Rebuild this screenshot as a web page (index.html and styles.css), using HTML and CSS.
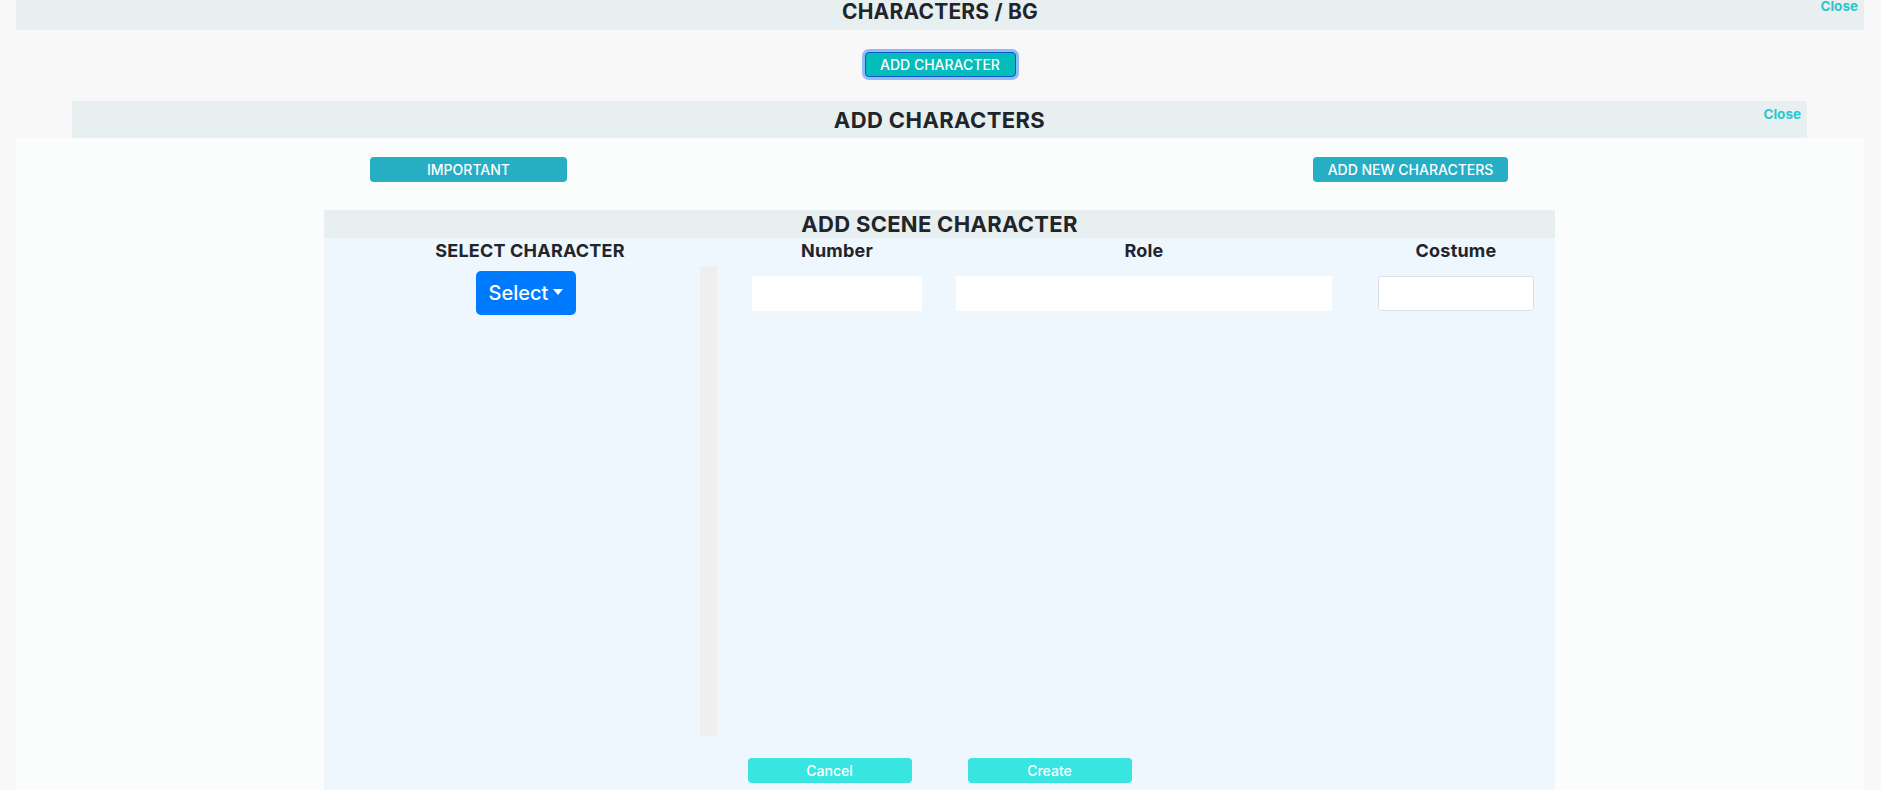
FILE: index.html
```html
<!DOCTYPE html>
<html lang="en">
<head>
<meta charset="utf-8">
<title>Characters / BG</title>
<link rel="stylesheet" href="styles.css">
</head>
<body>
<div class="page">
  <div class="modal-header">
    <h2 class="modal-title title-top">CHARACTERS / BG</h2>
    <a class="close-link close-top" href="#">Close</a>
  </div>
  <div class="toolbar">
    <button class="btn-add-character">ADD CHARACTER</button>
  </div>
  <div class="inner-header">
    <h2 class="modal-title">ADD CHARACTERS</h2>
    <a class="close-link close-inner" href="#">Close</a>
  </div>
  <div class="inner-body">
    <div class="actions">
      <button class="btn-info btn-important">IMPORTANT</button>
      <button class="btn-info btn-new">ADD NEW CHARACTERS</button>
    </div>
    <div class="scene-panel">
      <div class="scene-header">ADD SCENE CHARACTER</div>
      <div class="scene-body">
        <div class="scene-row">
          <div class="col col-select">
            <div class="col-title">SELECT CHARACTER</div>
            <button class="btn-select">Select<span class="caret"></span></button>
          </div>
          <div class="scroll-bar"></div>
          <div class="col col-number">
            <div class="col-title">Number</div>
            <input class="field field-plain" type="text">
          </div>
          <div class="col col-role">
            <div class="col-title">Role</div>
            <input class="field field-plain" type="text">
          </div>
          <div class="col col-costume">
            <div class="col-title">Costume</div>
            <input class="field field-bordered" type="text">
          </div>
        </div>
        <div class="footer">
          <button class="btn-footer">Cancel</button>
          <button class="btn-footer">Create</button>
        </div>
      </div>
    </div>
  </div>
</div>
</body>
</html>
```
FILE: styles.css
```css
* { box-sizing: border-box; }
html, body { margin: 0; padding: 0; }
body {
  background: #f8f8f8;
  font-family: Inter, "Liberation Sans", Arial, sans-serif;
  color: #212529;
  height: 790px;
  overflow: hidden;
}
button { font-family: inherit; cursor: pointer; }

.page {
  margin: 0 17px 0 16px;
}

.modal-header {
  position: relative;
  background: #e8eff1;
  height: 30px;
  display: flex;
  justify-content: center;
}
.modal-title {
  margin: 0;
  font-size: 22px;
  font-weight: 700;
  line-height: 24px;
  letter-spacing: 0.4px;
}
.title-top {
  font-size: 21px;
  letter-spacing: 0.2px;
}

.close-link {
  position: absolute;
  right: 6px;
  color: #2bc6cb;
  font-size: 13.5px;
  font-weight: 700;
  text-decoration: none;
  line-height: 12px;
}
.close-top { top: 0; }
.close-inner { top: 7px; }

.toolbar {
  height: 71px;
  display: flex;
  justify-content: center;
  padding-top: 22px;
}
.btn-add-character {
  width: 151px;
  height: 25px;
  padding: 0;
  background: #02bdbb;
  color: #fff;
  border: 1px solid #0a58ca;
  border-radius: 4px;
  box-shadow: 0 0 0 3px #8fbcf8;
  font-size: 14px;
  font-weight: 500;
}

.inner-header {
  position: relative;
  margin: 0 57px 0 56px;
  height: 37px;
  background: #e8eff1;
  display: flex;
  justify-content: center;
  align-items: center;
}

.inner-body {
  background: #fbfdfd;
  height: 652px;
}

.actions {
  display: flex;
  justify-content: space-between;
  padding: 19px 356px 0 354px;
}
.btn-info {
  height: 25px;
  background: #26aec5;
  color: #fff;
  border: none;
  border-radius: 4px;
  font-size: 14px;
  font-weight: 500;
  padding: 0;
}
.btn-important { width: 197px; }
.btn-new { width: 195px; }

.scene-panel {
  margin: 28px 309px 0 308px;
}
.scene-header {
  background: #e8eff1;
  height: 28px;
  text-align: center;
  font-size: 22px;
  font-weight: 700;
  line-height: 28px;
  letter-spacing: 0.3px;
}
.scene-body {
  background: #eef6fe;
  height: 560px;
}
.scene-row {
  display: flex;
  align-items: flex-start;
}
.col {
  display: flex;
  flex-direction: column;
  align-items: center;
}
.col-title {
  font-size: 18px;
  font-weight: 700;
  line-height: 20px;
  letter-spacing: 0.2px;
  padding-top: 3px;
  height: 23px;
  white-space: nowrap;
}
.col-select {
  width: 376px;
  padding-left: 28px;
}
.col-select .col-title { margin-left: 8px; }
.btn-select {
  margin-top: 10px;
  width: 100px;
  height: 44px;
  background: #007bff;
  color: #fff;
  border: none;
  border-radius: 5px;
  font-size: 20px;
  font-weight: 500;
  padding: 0;
}
.caret {
  display: inline-block;
  margin-left: 5px;
  vertical-align: 5px;
  border-top: 6px solid #fff;
  border-left: 5px solid transparent;
  border-right: 5px solid transparent;
}
.scroll-bar {
  width: 17px;
  height: 470px;
  margin-top: 28px;
  background: #efefef;
}
.col-number { width: 170px; margin-left: 35px; }
.col-role { width: 376px; margin-left: 34px; }
.col-costume { width: 156px; margin-left: 46px; }
.field {
  margin-top: 15px;
  width: 100%;
  height: 35px;
  background: #fff;
  font-size: 15px;
  padding: 0 8px;
  outline: none;
}
.field-plain { border: none; border-radius: 0; }
.field-bordered { border: 1px solid #dce2ea; border-radius: 3px; }

.footer {
  display: flex;
  justify-content: center;
  gap: 56px;
  margin-top: 22px;
}
.btn-footer {
  width: 164px;
  height: 25px;
  background: #38e5e0;
  color: #fff;
  border: none;
  border-radius: 4px;
  font-size: 14px;
  font-weight: 500;
  padding: 0;
}
```
